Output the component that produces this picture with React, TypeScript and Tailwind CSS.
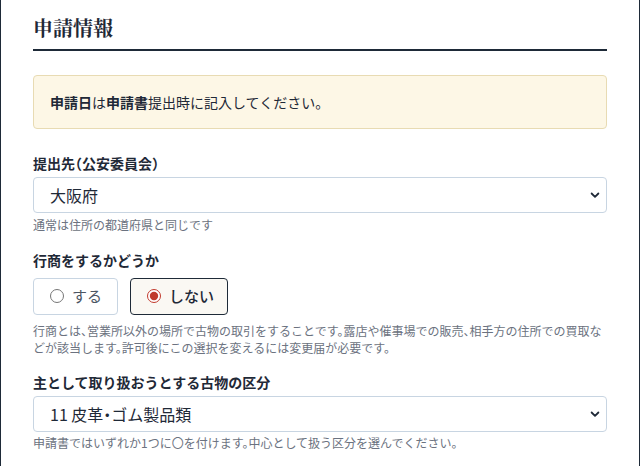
import { useState } from "react";

const Chevron = () => (
  <svg
    className="pointer-events-none absolute right-[6px] top-1/2 -translate-y-1/2"
    width="12"
    height="12"
    viewBox="0 0 16 16"
    fill="none"
  >
    <path
      d="M3.5 6l4.5 4.5L12.5 6"
      stroke="#1f2937"
      strokeWidth="2.4"
      strokeLinecap="round"
      strokeLinejoin="round"
    />
  </svg>
);

const SelectField = ({ value, options }: { value: string; options: string[] }) => (
  <div className="relative">
    <select
      defaultValue={value}
      className="h-9 w-full appearance-none rounded border border-[#c8d5e2] bg-white pl-4 pr-8 text-[16px] text-[#1f2937] outline-none"
    >
      {options.map((o) => (
        <option key={o} value={o}>
          {o}
        </option>
      ))}
    </select>
    <Chevron />
  </div>
);

export default function App() {
  const [peddle, setPeddle] = useState("no");

  return (
    <div className="min-h-[466px] border-x border-[#1e2a38] bg-white px-8 pt-[14px] font-['Noto_Sans_CJK_JP','Noto_Sans',sans-serif] text-[#1f2937] [font-feature-settings:'halt']">
      <h2 className="border-b-2 border-[#1e2a38] pb-[7px] font-['Noto_Serif_CJK_JP','Noto_Sans_CJK_JP',serif] text-[20px] font-bold leading-7 text-[#1f2937]">
        申請情報
      </h2>

      <div className="mt-6 rounded border border-[#e8dbb3] bg-[#fdf7e6] px-4 py-4 text-[14px] leading-5">
        <strong className="font-bold">申請日</strong>は<strong className="font-bold">申請書</strong>
        提出時に記入してください。
      </div>

      <div className="mt-6">
        <label className="mb-1 block text-[14px] font-bold leading-5">提出先（公安委員会）</label>
        <SelectField value="大阪府" options={["北海道", "東京都", "大阪府", "京都府"]} />
        <p className="mt-1 text-[12px] leading-[1.4] text-[#6b7280]">通常は住所の都道府県と同じです</p>
      </div>

      <div className="mt-4">
        <label className="mb-2 block text-[14px] font-bold leading-5">行商をするかどうか</label>
        <div className="flex gap-3">
          {[
            { key: "yes", label: "する" },
            { key: "no", label: "しない" },
          ].map((o) => {
            const on = peddle === o.key;
            return (
              <label
                key={o.key}
                className={
                  on
                    ? "flex h-[37px] cursor-pointer items-center gap-2 rounded border border-[#1e2a38] bg-[#faf8f3] pl-4 pr-[13px] text-[15px] font-medium text-[#1f2937]"
                    : "flex h-[37px] cursor-pointer items-center gap-2 rounded border border-[#c8d5e2] bg-white pl-4 pr-[15px] text-[15px] text-[#4b5563]"
                }
              >
                <input
                  type="radio"
                  name="peddle"
                  checked={on}
                  onChange={() => setPeddle(o.key)}
                  className="m-0 h-[14px] w-[14px] accent-[#c0392b]"
                />
                {o.label}
              </label>
            );
          })}
        </div>
        <p className="mt-2 text-[12px] leading-[1.4] text-[#6b7280]">
          行商とは、営業所以外の場所で古物の取引をすることです。露店や催事場での販売、相手方の住所での買取などが該当します。許可後にこの選択を変えるには変更届が必要です。
        </p>
      </div>

      <div className="mt-4">
        <label className="mb-1 block text-[14px] font-bold leading-5">主として取り扱おうとする古物の区分</label>
        <SelectField
          value="11 皮革・ゴム製品類"
          options={["1 美術品類", "2 衣類", "11 皮革・ゴム製品類", "13 書籍"]}
        />
        <p className="mt-[3px] text-[12px] leading-[1.4] text-[#6b7280]">
          申請書ではいずれか1つに〇を付けます。中心として扱う区分を選んでください。
        </p>
      </div>
    </div>
  );
}
